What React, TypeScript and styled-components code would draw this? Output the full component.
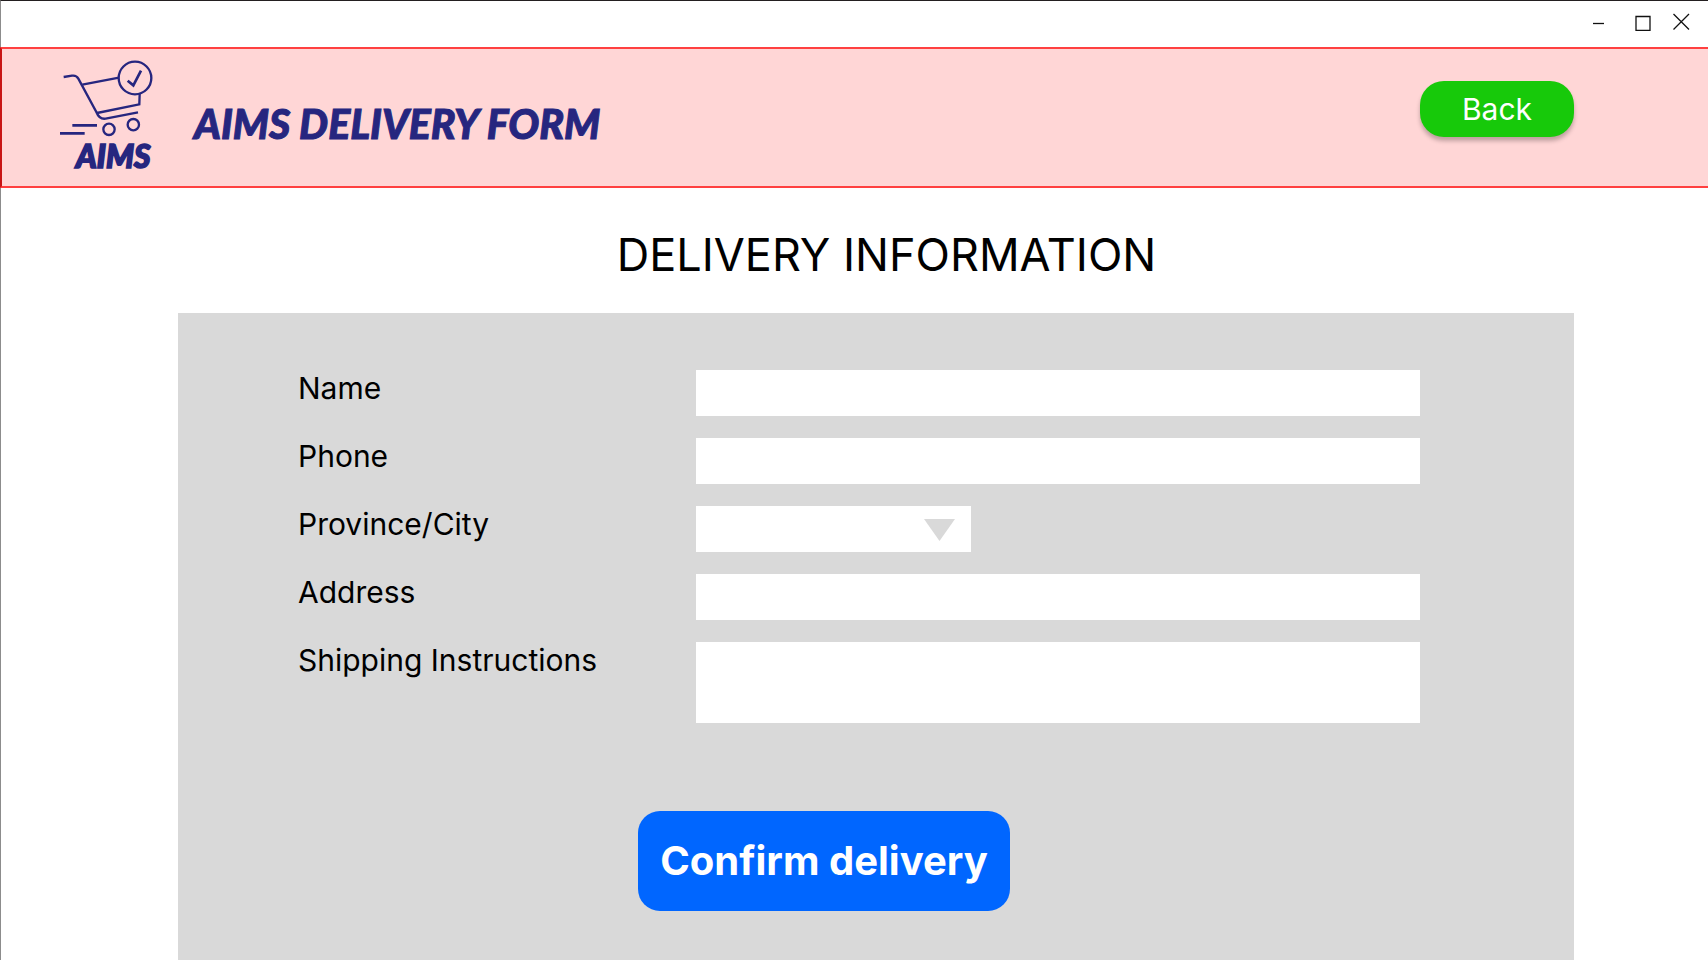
import React from 'react';
import styled, { createGlobalStyle } from 'styled-components';

const GlobalStyle = createGlobalStyle`
  *, *::before, *::after { box-sizing: border-box; }
  body {
    margin: 0;
    background: #fff;
    color: #000;
    font-family: Inter, "Liberation Sans", sans-serif;
  }
`;

const Window = styled.div`
  display: flex;
  flex-direction: column;
  min-height: 100vh;
  border-top: 1px solid #231f20;
  border-left: 1px solid #8c8c8c;
`;

const TitleBar = styled.div`
  display: flex;
  justify-content: flex-end;
  align-items: center;
  gap: 16px;
  height: 46px;
  padding: 0 15px 4px 0;
`;

const WindowButton = styled.button`
  display: flex;
  padding: 0;
  border: 0;
  background: none;
  color: #111;
  cursor: pointer;
`;

const Header = styled.header`
  display: flex;
  align-items: flex-start;
  height: 141px;
  margin-left: -1px;
  padding: 10px 134px 0 56px;
  border: solid #ff4040;
  border-width: 2px 0 2px 2px;
  border-left-color: #c81414;
  background: #ffd6d6;
`;

const Logo = styled.svg`
  flex: none;
  width: 98px;
  height: 114px;
  overflow: visible;
`;

const AppTitle = styled.h1`
  flex: 1;
  margin: 39px 0 0 38px;
  color: #26267f;
  font-family: Lato, "Open Sans", sans-serif;
  font-size: 41px;
  font-style: italic;
  font-weight: 900;
  line-height: 52px;
  -webkit-text-stroke: 1px #26267f;
`;

const BackButton = styled.button`
  width: 154px;
  height: 56px;
  margin-top: 22px;
  padding: 0;
  border: 0;
  border-radius: 24px;
  background: #17c90a;
  box-shadow: 0 4px 4px rgba(0, 0, 0, 0.25);
  color: #fff;
  font-family: inherit;
  font-size: 30px;
  font-weight: 400;
  line-height: 36px;
  cursor: pointer;
`;

const PageHeading = styled.h2`
  margin: 40px 0 31px;
  padding-left: 64px;
  font-size: 45px;
  font-weight: 400;
  line-height: 54px;
  text-align: center;
`;

const Panel = styled.form`
  flex: 1;
  display: flex;
  flex-direction: column;
  gap: 22px;
  margin: 0 134px 0 177px;
  padding: 57px 154px 48px 120px;
  background: #d9d9d9;
`;

const Field = styled.div`
  display: flex;
  align-items: flex-start;
`;

const Label = styled.label`
  flex: none;
  width: 398px;
  font-size: 30px;
  line-height: 36px;
`;

const TextInput = styled.input`
  flex: 1;
  min-width: 0;
  height: 46px;
  padding: 0 12px;
  border: 0;
  border-radius: 0;
  background: #fff;
  font: inherit;
  font-size: 24px;
`;

const TextArea = styled.textarea`
  flex: 1;
  min-width: 0;
  height: 81px;
  padding: 8px 12px;
  border: 0;
  border-radius: 0;
  background: #fff;
  font: inherit;
  font-size: 24px;
  resize: none;
`;

const SelectBox = styled.div`
  position: relative;
  width: 275px;
  height: 46px;
`;

const Select = styled.select`
  width: 100%;
  height: 100%;
  padding: 0 56px 0 12px;
  border: 0;
  border-radius: 0;
  background: #fff;
  appearance: none;
  font: inherit;
  font-size: 24px;
`;

const SelectArrow = styled.svg`
  position: absolute;
  top: 13px;
  right: 16px;
  pointer-events: none;
`;

const Actions = styled.div`
  display: flex;
  justify-content: center;
  margin-top: 66px;
  padding-right: 70px;
`;

const ConfirmButton = styled.button`
  width: 372px;
  height: 100px;
  padding: 0;
  border: 0;
  border-radius: 22px;
  background: #06f;
  color: #fff;
  font-family: inherit;
  font-size: 40px;
  font-weight: 700;
  line-height: 48px;
  cursor: pointer;
`;

const CITIES = ['Hà Nội', 'Hồ Chí Minh', 'Đà Nẵng'];

function AimsLogo() {
  return (
    <Logo viewBox="54 42 294 342" role="img" aria-label="AIMS">
      <g fill="none" stroke="#26267f" strokeWidth="7">
        <path d="M71 96 L96 92 Q109 90 115 101 L169 201 Q178 224 197 221 L294 202" />
        <path d="M127 119 L237 98" />
        <path d="M171 204 L298 178 L299 147" />
        <circle cx="285" cy="99" r="49" />
        <path d="M263 107 L280 121 L303 77" strokeWidth="8" />
        <circle cx="207" cy="253" r="17" />
        <circle cx="280" cy="239" r="17" />
        <path d="M97 241 H171 M60 265 H134" strokeWidth="8" />
      </g>
      <text
        x="108"
        y="370"
        fill="#26267f"
        stroke="#26267f"
        strokeWidth="5"
        fontFamily="Lato, 'Open Sans', sans-serif"
        fontSize="95"
        fontStyle="italic"
        fontWeight="900"
      >
        AIMS
      </text>
    </Logo>
  );
}

export default function App() {
  return (
    <>
      <GlobalStyle />
      <Window>
        <TitleBar>
          <WindowButton type="button" aria-label="Minimize">
            <svg width="26" height="18" viewBox="0 0 26 18">
              <path d="M0 10.5H11" stroke="currentColor" strokeWidth="1.3" />
            </svg>
          </WindowButton>
          <WindowButton type="button" aria-label="Maximize">
            <svg width="20" height="18" viewBox="0 0 20 18" fill="none">
              <path d="M1 3.5H15V17.5H1Z" stroke="currentColor" strokeWidth="1.3" />
            </svg>
          </WindowButton>
          <WindowButton type="button" aria-label="Close">
            <svg width="22" height="18" viewBox="0 0 22 18">
              <path d="M2.500 1L18 16.500M18 1L2.500 16.500" stroke="currentColor" strokeWidth="1.3" />
            </svg>
          </WindowButton>
        </TitleBar>
        <Header>
          <AimsLogo />
          <AppTitle>AIMS DELIVERY FORM</AppTitle>
          <BackButton type="button">Back</BackButton>
        </Header>
        <PageHeading>DELIVERY INFORMATION</PageHeading>
        <Panel onSubmit={(event: React.FormEvent) => event.preventDefault()}>
          <Field>
            <Label htmlFor="name">Name</Label>
            <TextInput id="name" type="text" />
          </Field>
          <Field>
            <Label htmlFor="phone">Phone</Label>
            <TextInput id="phone" type="tel" />
          </Field>
          <Field>
            <Label htmlFor="city">Province/City</Label>
            <SelectBox>
              <Select id="city" defaultValue="">
                <option value="" />
                {CITIES.map((city) => (
                  <option key={city}>{city}</option>
                ))}
              </Select>
              <SelectArrow width="31" height="22" viewBox="0 0 31 22" aria-hidden="true">
                <path d="M0 0H31L15.500 22Z" fill="#d9d9d9" />
              </SelectArrow>
            </SelectBox>
          </Field>
          <Field>
            <Label htmlFor="address">Address</Label>
            <TextInput id="address" type="text" />
          </Field>
          <Field>
            <Label htmlFor="instructions">Shipping Instructions</Label>
            <TextArea id="instructions" />
          </Field>
          <Actions>
            <ConfirmButton type="submit">Confirm delivery</ConfirmButton>
          </Actions>
        </Panel>
      </Window>
    </>
  );
}
